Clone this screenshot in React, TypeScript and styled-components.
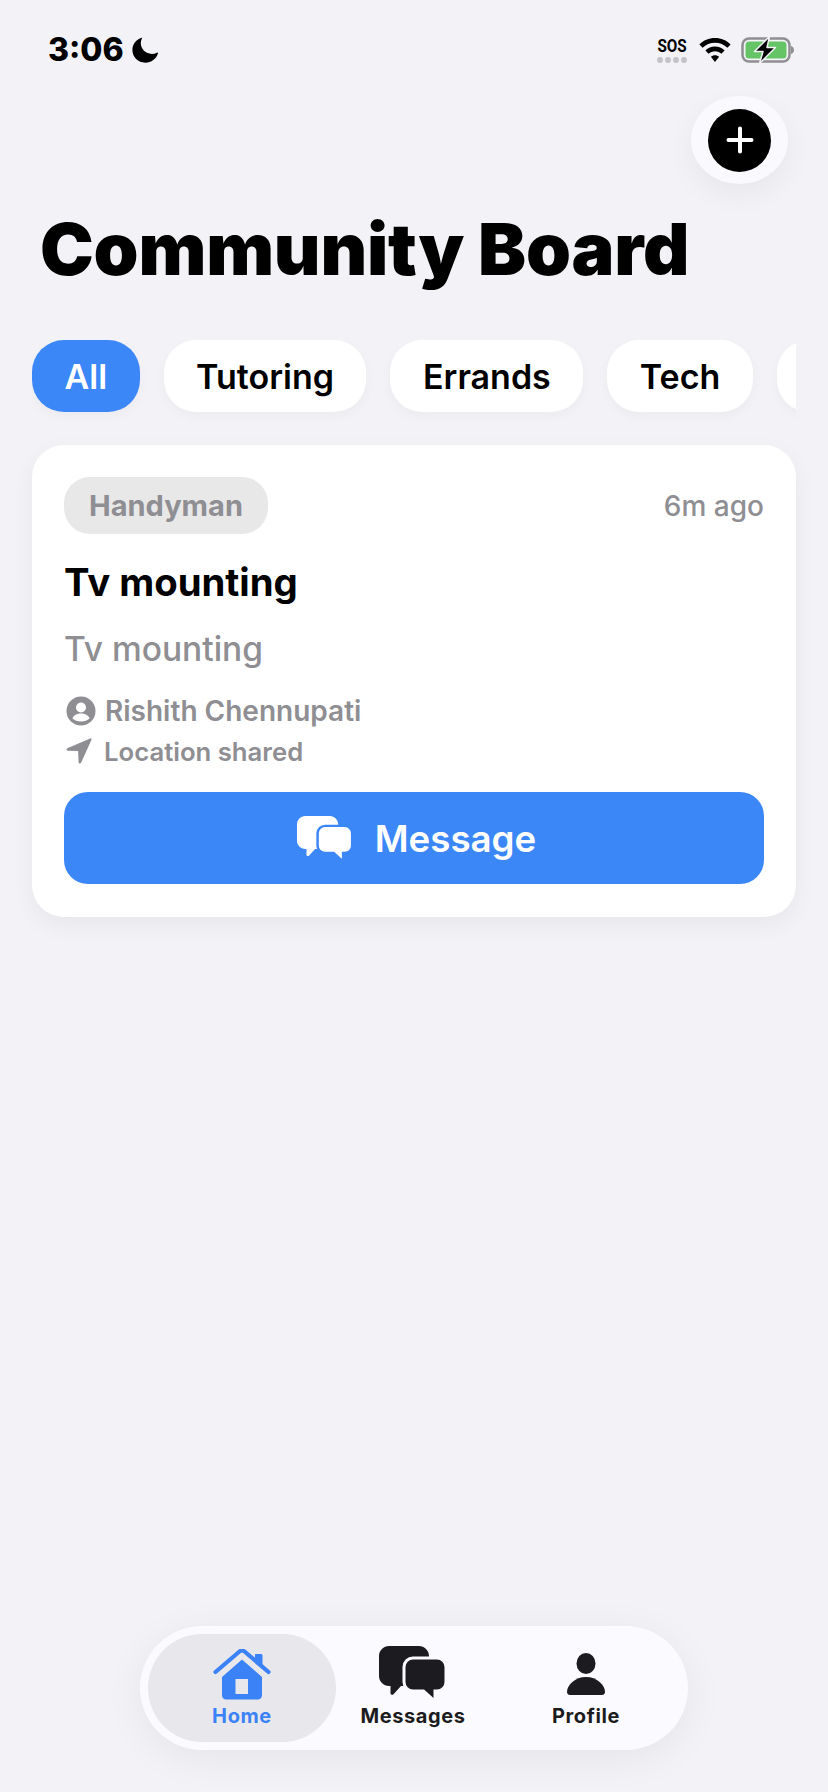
import styled, { createGlobalStyle } from "styled-components";

const GlobalStyle = createGlobalStyle`
  html, body {
    margin: 0;
    padding: 0;
    background: #f2f2f7;
  }
  * {
    box-sizing: border-box;
  }
`;

const categories = ["All", "Tutoring", "Errands", "Tech", "Handyman"];

const navItems = [
  { label: "Home", width: 188, active: true },
  { label: "Messages", width: 154, active: false },
  { label: "Profile", width: 192, active: false },
];

const MoonIcon = () => (
  <svg width="28" height="26" viewBox="0 0 28 26">
    <path
      d="M10.5 0.6C4.6 2 0.4 7.2 0.4 13.1c0 7.1 5.7 12.6 12.9 12.6 6 0 11-3.8 12.6-9.2.2-.7-.4-1.1-1-.8-1.6.8-3.2 1.2-5 1.2-6.2 0-11.1-4.8-11.1-10.8 0-1.7.4-3.3 1.1-4.7.3-.6 0-1-.4-.8z"
      fill="#000"
    />
  </svg>
);

const WifiIcon = () => (
  <svg width="32" height="24" viewBox="0 0 32 24">
    <path
      d="M16 0C9.9 0 4.4 2.4.4 6.4l3.2 3.3C6.8 6.6 11.2 4.7 16 4.7s9.2 1.9 12.4 5l3.2-3.3C27.6 2.4 22.1 0 16 0z"
      fill="#000"
    />
    <path
      d="M16 8.6c-3.7 0-7.1 1.5-9.6 3.9l3.2 3.3c1.7-1.6 3.9-2.6 6.4-2.6s4.7 1 6.4 2.6l3.2-3.3C23.1 10.1 19.7 8.6 16 8.6z"
      fill="#000"
    />
    <path d="M16 17.2c-1.6 0-3 .6-4.1 1.6L16 24l4.1-5.2c-1.1-1-2.5-1.600-4.100-1.600z" fill="#000" />
  </svg>
);

const BatteryIcon = () => (
  <svg width="54" height="28" viewBox="0 0 54 28">
    <rect x="1.500" y="2.500" width="47" height="23" rx="6.500" fill="none" stroke="#8f8f92" strokeWidth="2.500" />
    <rect x="4.500" y="5.500" width="41" height="17" rx="3.500" fill="#65c466" />
    <path d="M50 10v8c1.800-.5 3-2.200 3-4s-1.200-3.500-3-4z" fill="#8f8f92" />
    <path
      d="M28.500 0.500L13.500 15.500h8.500l-3.500 12L34.500 11.500h-8.500z"
      fill="#000"
      stroke="#f2f2f7"
      strokeWidth="1.500"
      strokeLinejoin="round"
    />
  </svg>
);

const PlusIcon = () => (
  <svg width="30" height="30" viewBox="0 0 30 30">
    <path d="M15 3.500v23M3.500 15h23" stroke="#fff" strokeWidth="4" strokeLinecap="round" />
  </svg>
);

const PersonCircleIcon = () => (
  <svg width="30" height="30" viewBox="0 0 30 30">
    <circle cx="15" cy="15" r="14.500" fill="#8e8e93" />
    <circle cx="15" cy="11.500" r="5" fill="#fff" />
    <path d="M6.500 22.500c1-3.300 4.500-5 8.500-5s7.500 1.700 8.500 5c-2 2-5 3-8.500 3s-6.500-1-8.500-3z" fill="#fff" />
  </svg>
);

const LocationIcon = () => (
  <svg width="26" height="26" viewBox="0 0 26 26">
    <path
      d="M24.200.4 1.300 10.300c-1.300.6-1 2.400.5 2.400l10.300.2.500 11.300c.1 1.500 1.900 1.800 2.500.5L25.500 1.800c.4-.9-.4-1.800-1.300-1.400z"
      fill="#8e8e93"
    />
  </svg>
);

const ChatPair = ({ size, front, back, gap }: { size: number; front: string; back: string; gap: string }) => (
  <svg width={size} height={(size * 54) / 68} viewBox="0 0 68 54">
    <path
      d="M10 0h30c5.500 0 10 4.500 10 10v20c0 5.500-4.500 10-10 10H22l-7.500 8.200c-1 1-3 .5-3-1V40H10C4.500 40 0 35.500 0 30V10C0 4.500 4.500 0 10 0z"
      fill={back}
    />
    <path
      d="M34 12h24c5 0 9 4 9 9v15c0 5-4 9-9 9h-2v7c0 1.200-1.500 1.800-2.500 1L44.500 45H34c-5 0-9-4-9-9V21c0-5 4-9 9-9z"
      fill={front}
      stroke={gap}
      strokeWidth="3"
    />
  </svg>
);

const HomeIcon = () => (
  <svg width="58" height="51" viewBox="0 0 58 51">
    <path d="M42 5h6c.8 0 1.500.7 1.500 1.500V19L42 12z" fill="#3b82f6" />
    <path
      d="M2.500 23 26.500 2.500c1.400-1.200 3.600-1.200 5 0L55.500 23"
      fill="none"
      stroke="#3b82f6"
      strokeWidth="4.200"
      strokeLinecap="round"
      strokeLinejoin="round"
    />
    <path
      d="M29 10.500 49 28v18.500c0 2.200-1.800 4-4 4H13c-2.200 0-4-1.800-4-4V28zM22.500 30v15h12.500V30z"
      fill="#3b82f6"
      fillRule="evenodd"
    />
  </svg>
);

const ProfileIcon = () => (
  <svg width="40" height="47" viewBox="0 0 40 47">
    <ellipse cx="20" cy="10.500" rx="9.500" ry="10.500" fill="#1c1c20" />
    <path d="M1 39c0-7 8-15 19-15s19 8 19 15c0 1.500-1 3-3 3H4c-2 0-3-1.500-3-3z" fill="#1c1c20" />
  </svg>
);

const NavIcon = ({ label }: { label: string }) => {
  if (label === "Home") return <HomeIcon />;
  if (label === "Messages") return <ChatPair size={68} front="#1c1c20" back="#1c1c20" gap="#fbfbff" />;
  return <ProfileIcon />;
};

const App = () => {
  return (
    <>
      <GlobalStyle />
      <Page>
        <StatusBar>
          <TimeGroup>
            <Time>3:06</Time>
            <MoonIcon />
          </TimeGroup>
          <StatusIcons>
            <Sos>
              <SosText>SOS</SosText>
              <SosDots>
                <i />
                <i />
                <i />
                <i />
              </SosDots>
            </Sos>
            <WifiIcon />
            <BatteryIcon />
          </StatusIcons>
        </StatusBar>

        <Header>
          <AddButton type="button">
            <AddCircle>
              <PlusIcon />
            </AddCircle>
          </AddButton>
        </Header>

        <Title>Community Board</Title>

        <Chips>
          {categories.map((name) => (
            <Chip key={name} $active={name === "All"}>
              {name}
            </Chip>
          ))}
        </Chips>

        <Card>
          <CardTop>
            <Tag>Handyman</Tag>
            <Ago>6m ago</Ago>
          </CardTop>
          <PostTitle>Tv mounting</PostTitle>
          <PostBody>Tv mounting</PostBody>
          <MetaRow>
            <PersonCircleIcon />
            <AuthorName>Rishith Chennupati</AuthorName>
          </MetaRow>
          <LocationRow>
            <LocationIcon />
            <LocationText>Location shared</LocationText>
          </LocationRow>
          <MessageButton type="button">
            <ChatPair size={56} front="#fff" back="#fff" gap="#3b87f7" />
            Message
          </MessageButton>
        </Card>

        <BottomNav>
          {navItems.map((item) => (
            <NavItem key={item.label} $active={item.active} $width={item.width}>
              <NavIconSlot>
                <NavIcon label={item.label} />
              </NavIconSlot>
              <NavLabel $active={item.active}>{item.label}</NavLabel>
            </NavItem>
          ))}
        </BottomNav>
      </Page>
    </>
  );
};

const Page = styled.div`
  position: relative;
  width: 828px;
  height: 1792px;
  overflow: hidden;
  background: #f2f2f7;
  font-family: Inter, "Liberation Sans", sans-serif;
  color: #000;
`;

const StatusBar = styled.div`
  display: flex;
  justify-content: space-between;
  align-items: flex-start;
  height: 96px;
  padding: 36px 33px 0 48px;
`;

const TimeGroup = styled.div`
  display: flex;
  align-items: center;
  gap: 8px;
`;

const Time = styled.span`
  font-size: 32px;
  line-height: 28px;
  font-weight: 800;
`;

const StatusIcons = styled.div`
  display: flex;
  align-items: center;
  gap: 10px;
`;

const Sos = styled.div`
  display: flex;
  flex-direction: column;
  align-items: center;
  gap: 3px;
`;

const SosText = styled.span`
  font-family: "Roboto", sans-serif;
  font-size: 18px;
  line-height: 17px;
  font-weight: 700;
  letter-spacing: -0.2px;
  transform: scaleX(0.85);
`;

const SosDots = styled.div`
  display: flex;
  gap: 2.300px;
  i {
    width: 6px;
    height: 6px;
    border-radius: 50%;
    background: #c4c4c8;
  }
`;

const Header = styled.div`
  display: flex;
  justify-content: flex-end;
  height: 88px;
  padding-right: 40px;
`;

const AddButton = styled.button`
  display: flex;
  align-items: center;
  justify-content: center;
  width: 97px;
  height: 88px;
  padding: 0;
  border: none;
  border-radius: 50%;
  background: #fafafe;
  box-shadow: 0 10px 30px rgba(0, 0, 0, 0.05);
`;

const AddCircle = styled.span`
  display: flex;
  align-items: center;
  justify-content: center;
  width: 63px;
  height: 63px;
  border-radius: 50%;
  background: #000;
`;

const Title = styled.h1`
  margin: 23px 0 0;
  padding-left: 40px;
  font-size: 72px;
  line-height: 84px;
  font-weight: 900;
  letter-spacing: -0.2px;
  white-space: nowrap;
`;

const Chips = styled.div`
  display: flex;
  gap: 24px;
  margin: 49px 32px 0;
  padding-bottom: 20px;
  overflow: hidden;
`;

const Chip = styled.div<{ $active: boolean }>`
  flex: none;
  height: 72px;
  padding: 0 32.500px;
  border-radius: 32px;
  display: flex;
  align-items: center;
  font-size: 34px;
  font-weight: 600;
  color: ${(p) => (p.$active ? "#fff" : "#000")};
  background: ${(p) => (p.$active ? "#3b87f7" : "#fff")};
  box-shadow: 0 4px 12px rgba(0, 0, 0, 0.035);
`;

const Card = styled.div`
  margin: 13px 32px 0;
  padding: 32px;
  height: 472px;
  border-radius: 32px;
  background: #fff;
  box-shadow: 0 8px 24px rgba(0, 0, 0, 0.05);
`;

const CardTop = styled.div`
  display: flex;
  justify-content: space-between;
  align-items: center;
`;

const Tag = styled.span`
  display: flex;
  align-items: center;
  height: 57px;
  padding: 0 25px;
  border-radius: 26px;
  background: #e8e8e9;
  color: #8e8e93;
  font-size: 29px;
  font-weight: 700;
`;

const Ago = styled.span`
  color: #8e8e93;
  font-size: 28px;
  font-weight: 500;
`;

const PostTitle = styled.h3`
  margin: 25px 0 0;
  font-size: 38.300px;
  line-height: 46px;
  font-weight: 700;
`;

const PostBody = styled.p`
  margin: 22px 0 0;
  font-size: 33.500px;
  line-height: 44px;
  font-weight: 500;
  color: #8e8e93;
`;

const MetaRow = styled.div`
  display: flex;
  align-items: center;
  gap: 9px;
  margin-top: 20px;
  padding-left: 2px;
  height: 40px;
`;

const AuthorName = styled.span`
  font-size: 28px;
  font-weight: 600;
  color: #8e8e93;
`;

const LocationRow = styled(MetaRow)`
  margin-top: 0;
  gap: 12px;
  height: 40px;
`;

const LocationText = styled.span`
  font-size: 25.700px;
  font-weight: 600;
  color: #8e8e93;
`;

const MessageButton = styled.button`
  display: flex;
  align-items: center;
  justify-content: center;
  gap: 22px;
  width: 100%;
  height: 92px;
  margin-top: 21px;
  padding: 0 0 0 5px;
  border: none;
  border-radius: 24px;
  background: #3b87f7;
  color: #fff;
  font-family: inherit;
  font-size: 36.700px;
  font-weight: 600;
`;

const BottomNav = styled.nav`
  position: absolute;
  left: 140px;
  top: 1626px;
  display: flex;
  width: 548px;
  height: 124px;
  padding: 8px;
  border-radius: 62px;
  background: #fbfbff;
  box-shadow: 0 8px 40px rgba(0, 0, 0, 0.06);
`;

const NavItem = styled.div<{ $active: boolean; $width: number }>`
  flex: none;
  width: ${(p) => p.$width}px;
  height: 108px;
  display: flex;
  flex-direction: column;
  align-items: center;
  border-radius: 54px;
  background: ${(p) => (p.$active ? "#e8e8ec" : "transparent")};
`;

const NavIconSlot = styled.div`
  display: flex;
  align-items: flex-end;
  justify-content: center;
  height: 66px;
`;

const NavLabel = styled.span<{ $active: boolean }>`
  margin-top: 3px;
  font-size: 20px;
  line-height: 26px;
  font-weight: 700;
  letter-spacing: 0.6px;
  color: ${(p) => (p.$active ? "#3b82f6" : "#1c1c20")};
`;

export default App;
